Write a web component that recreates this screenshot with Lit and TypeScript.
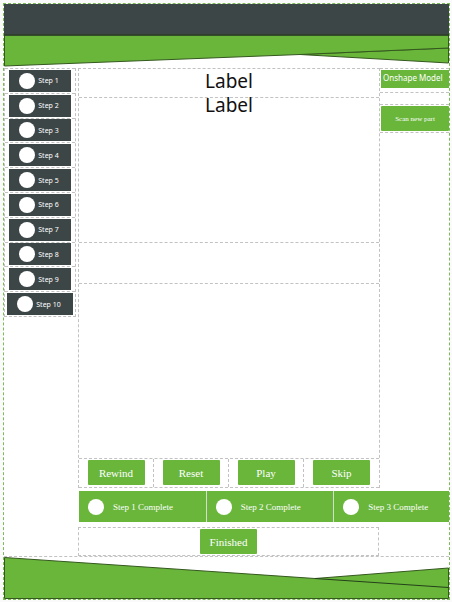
import { LitElement, html, css } from "lit";
import { customElement } from "lit/decorators.js";

@customElement("app-root")
export class AppRoot extends LitElement {
  static styles = css`
    :host {
      --green: #69b63b;
      --slate: #3d4647;
      --line: 1px dashed #c2c2c2;
      display: block;
      padding: 3px 2px 3px 3px;
      background: #fafafa;
      font-family: "Noto Sans", "Open Sans", sans-serif;
    }
    * {
      box-sizing: border-box;
    }
    .frame {
      border: 1px dashed #7dbb58;
      background: #fff;
    }
    .banner {
      display: block;
      width: 100%;
    }
    .top {
      height: 64px;
    }
    .bottom {
      height: 42px;
    }
    .body {
      display: grid;
      grid-template-columns: 74px minmax(0, 1fr);
      border-bottom: var(--line);
    }
    .steps {
      display: grid;
      grid-template-rows: repeat(10, 1fr);
      align-self: start;
      height: 249px;
      margin: 0 2px 0 0;
      padding: 0;
      list-style: none;
      border: var(--line);
      border-top: 0;
    }
    .steps li {
      display: flex;
      align-items: center;
      justify-content: center;
      border-top: var(--line);
    }
    button {
      display: block;
      border: 0;
      padding: 0;
      color: #fff;
      background: var(--green);
      border-radius: 1px;
      font: 11px "Liberation Serif", serif;
    }
    .step {
      display: flex;
      align-items: center;
      gap: 3px;
      height: 22px;
      padding: 0 12px 0 10px;
      border-radius: 0;
      background: var(--slate);
      font: 7px "Noto Sans", "Open Sans", sans-serif;
      white-space: nowrap;
    }
    .dot {
      flex: none;
      width: 16px;
      height: 16px;
      border-radius: 50%;
      background: #fff;
    }
    .upper {
      display: grid;
      grid-template-columns: minmax(0, 1fr) 69px;
    }
    .centre {
      border: var(--line);
      border-bottom: 0;
    }
    .label {
      height: 29px;
      border-bottom: var(--line);
      text-align: center;
      font-size: 19px;
      line-height: 24px;
      color: #111;
    }
    .view {
      height: 145px;
      line-height: 14px;
    }
    .strip {
      height: 41px;
      border-bottom: var(--line);
    }
    .canvas {
      height: 174px;
    }
    .controls {
      display: grid;
      grid-template-columns: repeat(4, 1fr);
      height: 30px;
      border-top: var(--line);
      border-bottom: var(--line);
    }
    .controls div {
      display: flex;
      justify-content: center;
      padding-top: 1px;
      border-right: var(--line);
    }
    .controls div:last-child {
      border-right: 0;
    }
    .action {
      width: 57px;
      height: 25px;
    }
    .side {
      border-top: var(--line);
    }
    .model {
      height: 24px;
      padding: 1px 0 0 1px;
      border-bottom: var(--line);
    }
    .model div {
      height: 18px;
      padding-left: 2px;
      background: var(--green);
      color: #fff;
      font-size: 8px;
      line-height: 16px;
      white-space: nowrap;
    }
    .spacer {
      height: 12px;
      border-bottom: var(--line);
    }
    .scan {
      height: 28px;
      padding: 1px 0 0 1px;
      border-bottom: var(--line);
    }
    .scan button {
      width: 100%;
      height: 25px;
      font-size: 7px;
    }
    .progress {
      display: grid;
      grid-template-columns: 127fr 127fr 115fr;
      gap: 1px;
      margin: 3px 0 5px 1px;
      background: #d4ddcf;
    }
    .done {
      display: flex;
      align-items: center;
      gap: 9px;
      height: 31px;
      padding-left: 9px;
      background: var(--green);
      color: #fff;
      font: 9px "Liberation Serif", serif;
      white-space: nowrap;
    }
    .finish {
      display: flex;
      align-items: center;
      justify-content: center;
      height: 29px;
      margin-right: 70px;
      border: var(--line);
    }

  `;

  render() {
    const steps = Array.from({ length: 10 }, (_, i) => i + 1);
    return html`
      <div class="frame">
        <svg class="banner top" viewBox="0 0 445 64" preserveAspectRatio="none" aria-hidden="true">
          <rect width="445" height="31" fill="#3d4647" />
          <g fill="#69b63b" stroke="#35581f" stroke-width="1">
            <path d="M296 50.5 L444.5 44 V59 Z" />
            <path d="M0.5 31 H444.5 V44 L296 50.5 L0.5 62 Z" />
          </g>
          <path d="M0 31 H445" stroke="#2c3a2b" stroke-width="1.5" />
        </svg>
        <div class="body">
          <ul class="steps">
            ${steps.map(
              (n) => html`<li><button class="step"><span class="dot"></span>Step ${n}</button></li>`
            )}
          </ul>
          <div>
            <div class="upper">
              <div class="centre">
                <div class="label">Label</div>
                <div class="label view">Label</div>
                <div class="strip"></div>
                <div class="canvas"></div>
                <div class="controls">
                  ${["Rewind", "Reset", "Play", "Skip"].map(
                    (t) => html`<div><button class="action">${t}</button></div>`
                  )}
                </div>
              </div>
              <div class="side">
                <div class="model"><div>Onshape Model</div></div>
                <div class="spacer"></div>
                <div class="scan"><button>Scan new part</button></div>
              </div>
            </div>
            <div class="progress">
              ${[1, 2, 3].map(
                (n) => html`<div class="done"><span class="dot"></span>Step ${n} Complete</div>`
              )}
            </div>
            <div class="finish"><button class="action">Finished</button></div>
          </div>
        </div>
        <svg class="banner bottom" viewBox="0 0 445 42" preserveAspectRatio="none" aria-hidden="true">
          <g fill="#69b63b" stroke="#35581f" stroke-width="1">
            <path d="M0.5 0.5 L311 21.5 L444.5 11 V41.5 H0.5 Z" />
            <path d="M311 21.5 L444.5 30.5" stroke="#24401a" />
          </g>
        </svg>
      </div>
    `;
  }
}
